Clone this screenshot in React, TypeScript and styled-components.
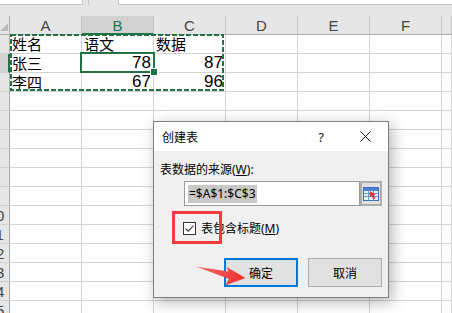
import React from "react";
import styled, { createGlobalStyle } from "styled-components";

const GlobalStyle = createGlobalStyle`
  html, body { margin: 0; padding: 0; background: #fff; overflow: hidden; }
  #root { width: 452px; height: 313px; }
`;

const Screen = styled.div`
  position: relative;
  width: 452px;
  height: 313px;
  overflow: hidden;
  background: #e6e6e6;
  font-family: "Liberation Sans", "Noto Sans CJK SC", sans-serif;
`;

const FormulaStrip = styled.div`
  display: flex;
  align-items: flex-start;
  height: 16px;
`;

const NameBox = styled.div`
  width: 82px;
  height: 4px;
  background: #fff;
  border-right: 1px solid #c6c6c6;
  border-bottom: 1px solid #c6c6c6;
`;

const StripGap = styled.div`
  width: 35px;
  height: 5px;
  display: flex;
  padding-left: 5px;
  box-sizing: border-box;
`;

const StripTick = styled.div`
  width: 1px;
  height: 5px;
  background: #c6c6c6;
`;

const FormulaInput = styled.div`
  flex: 1;
  height: 4px;
  background: #fff;
  border-left: 1px solid #c6c6c6;
  border-bottom: 1px solid #c6c6c6;
`;

const Sheet = styled.div`
  display: grid;
  grid-template-columns: 10px repeat(6, 72px) 10px;
  grid-auto-rows: 19px;
`;

const Corner = styled.div`
  position: relative;
  box-sizing: border-box;
  background: #e6e6e6;
  border-right: 1px solid #ababab;
  border-bottom: 1px solid #ababab;
  display: flex;
  align-items: flex-end;
  padding: 0 0 3px 0;
`;

const ColHeader = styled.div<{ $active?: boolean }>`
  box-sizing: border-box;
  background: ${(p) => (p.$active ? "#d2d2d2" : "#e6e6e6")};
  color: ${(p) => (p.$active ? "#217346" : "#444")};
  border-right: 1px solid #c6c6c6;
  border-bottom: ${(p) => (p.$active ? "2px solid #217346" : "1px solid #ababab")};
  display: flex;
  align-items: center;
  justify-content: center;
  font-size: 15px;
  padding-top: 1px;
`;

const RowHeader = styled.div<{ $active?: boolean }>`
  box-sizing: border-box;
  background: ${(p) => (p.$active ? "#d2d2d2" : "#e6e6e6")};
  border-right: ${(p) => (p.$active ? "2px solid #217346" : "1px solid #ababab")};
  border-bottom: 1px solid #d0d0d0;
  display: flex;
  justify-content: flex-end;
  align-items: center;
  overflow: hidden;
  color: #444;
  font-size: 15px;
`;

const RowNum = styled.span`
  flex-shrink: 0;
  width: 26px;
  text-align: center;
`;

const Cell = styled.div<{ $num?: boolean }>`
  box-sizing: border-box;
  background: #fff;
  border-right: 1px solid #d4d4d4;
  border-bottom: 1px solid #d4d4d4;
  display: flex;
  align-items: flex-end;
  justify-content: ${(p) => (p.$num ? "flex-end" : "flex-start")};
  padding: 0 ${(p) => (p.$num ? "2px" : "1px")} 0 ${(p) => (p.$num ? "0" : "2px")};
  font-size: ${(p) => (p.$num ? "17px" : "15px")};
  line-height: 18px;
  color: #000;
  white-space: nowrap;
`;

const CjkText = styled.span`
  font-family: "Noto Sans CJK SC", sans-serif;
  line-height: 18px;
`;

const Ants = styled.svg`
  position: absolute;
  left: 10px;
  top: 34px;
`;

const ActiveCell = styled.div`
  position: absolute;
  left: 80px;
  top: 52px;
  width: 75px;
  height: 21px;
  box-sizing: border-box;
  border: 2px solid #217346;
`;

const FillHandle = styled.div`
  position: absolute;
  right: -5px;
  bottom: -5px;
  width: 6px;
  height: 6px;
  background: #217346;
  border: 1px solid #fff;
`;

const Dialog = styled.div`
  position: absolute;
  left: 153px;
  top: 121px;
  width: 236px;
  height: 177px;
  box-sizing: border-box;
  border: 1px solid #7f7f7f;
  background: #f0f0f0;
  box-shadow: 3px 4px 14px rgba(0, 0, 0, 0.3);
  display: flex;
  flex-direction: column;
  font-family: "Noto Sans", "Noto Sans CJK SC", sans-serif;
  font-size: 12px;
  color: #000;
`;

const TitleBar = styled.div`
  height: 29px;
  background: #fff;
  display: flex;
  align-items: center;
  padding-left: 8px;
`;

const Title = styled.span`
  flex: 1;
`;

const HelpButton = styled.span`
  width: 28px;
  margin-right: 8px;
  text-align: center;
  font-size: 13px;
  color: #111;
`;

const CloseButton = styled.span`
  width: 45px;
  display: flex;
  justify-content: center;
  align-items: center;
`;

const Body = styled.div`
  flex: 1;
  display: flex;
  flex-direction: column;
  padding: 11px 6px 9px 6px;
`;

const Label = styled.div`
  line-height: 16px;
  height: 16px;
`;

const InputRow = styled.div`
  display: flex;
  margin: 3px 0 0 24px;
`;

const RangeInput = styled.div`
  width: 176px;
  height: 25px;
  box-sizing: border-box;
  border: 1px solid #9a9a9a;
  background: #fff;
  display: flex;
  align-items: center;
  padding-left: 3px;
`;

const Selected = styled.span`
  background: #c8c8c8;
  line-height: 18px;
  padding: 0 1px;
`;

const PickButton = styled.div`
  width: 22px;
  height: 25px;
  box-sizing: border-box;
  border: 2px solid #adadad;
  background: #e1e1e1;
  display: flex;
  align-items: center;
  justify-content: center;
`;

const CheckRow = styled.div`
  display: flex;
  align-items: center;
  height: 16px;
  margin: 14px 0 0 23px;
  gap: 5px;
`;

const CheckBox = styled.div`
  width: 13px;
  height: 13px;
  box-sizing: border-box;
  border: 1px solid #333;
  background: #fff;
  display: flex;
  align-items: center;
  justify-content: center;
`;

const ButtonRow = styled.div`
  display: flex;
  justify-content: flex-end;
  gap: 10px;
  margin-top: 22px;
`;

const Button = styled.div<{ $primary?: boolean }>`
  width: 74px;
  height: 29px;
  box-sizing: border-box;
  background: #e1e1e1;
  border: ${(p) => (p.$primary ? "2px solid #0078d7" : "1px solid #adadad")};
  display: flex;
  align-items: center;
  justify-content: center;
`;

const RedBox = styled.div`
  position: absolute;
  left: 172px;
  top: 211px;
  width: 50px;
  height: 33px;
  box-sizing: border-box;
  border: 3px solid #f23b3b;
`;

const Arrow = styled.svg`
  position: absolute;
  left: 0;
  top: 0;
  pointer-events: none;
`;

const cols = ["A", "B", "C", "D", "E", "F", ""];
const data: (string | number)[][] = [
  ["姓名", "语文", "数据"],
  ["张三", 78, 87],
  ["李四", 67, 96],
];

function PickIcon() {
  return (
    <svg width="16" height="14" viewBox="0 0 16 14">
      <rect x="0.5" y="0.5" width="15" height="13" fill="#eaf1fa" stroke="#3d6fb8" />
      <rect x="1" y="1" width="14" height="3" fill="#4f84cc" />
      <path d="M1 6.5H15M1 9.5H15M5.5 4V13.5M10.5 4V13.5" stroke="#6f97cf" strokeWidth="1" />
      <path d="M7 4.5 L7 10 L8.6 8.6 L10.6 12 L12 11.2 L10 7.9 L12.2 7.6 Z" fill="#e5392b" stroke="#b0221a" strokeWidth="0.5" />
    </svg>
  );
}

export default function App() {
  return (
    <Screen>
      <GlobalStyle />
      <FormulaStrip>
        <NameBox />
        <StripGap>
          <StripTick />
        </StripGap>
        <FormulaInput />
      </FormulaStrip>
      <Sheet>
        <Corner>
          <svg width="8" height="8" viewBox="0 0 8 8">
            <path d="M8 0 L8 8 L0 8 Z" fill="#b9b9b9" />
          </svg>
        </Corner>
        {cols.map((c, i) => (
          <ColHeader key={i} $active={c === "B"}>
            {c}
          </ColHeader>
        ))}
        {Array.from({ length: 15 }, (_, r) => (
          <React.Fragment key={r}>
            <RowHeader $active={r === 1}>
              <RowNum>{r + 1}</RowNum>
            </RowHeader>
            {cols.map((_, ci) => {
              const v = data[r]?.[ci];
              const isNum = typeof v === "number";
              return (
                <Cell key={ci} $num={isNum}>
                  {v === undefined ? null : isNum ? v : <CjkText>{v}</CjkText>}
                </Cell>
              );
            })}
          </React.Fragment>
        ))}
      </Sheet>

      <Ants width="214" height="57" viewBox="0 0 214 57">
        <rect x="1" y="1" width="212" height="55" fill="none" stroke="#217346" strokeWidth="2" strokeDasharray="5 2" />
      </Ants>
      <ActiveCell>
        <FillHandle />
      </ActiveCell>

      <Dialog>
        <TitleBar>
          <Title>创建表</Title>
          <HelpButton>?</HelpButton>
          <CloseButton>
            <svg width="11" height="11" viewBox="0 0 11 11">
              <path d="M0.5 0.5 L10.5 10.5 M10.5 0.5 L0.5 10.5" stroke="#111" strokeWidth="1" />
            </svg>
          </CloseButton>
        </TitleBar>
        <Body>
          <Label>
            表数据的来源(<u>W</u>):
          </Label>
          <InputRow>
            <RangeInput>
              <Selected>=$A$1:$C$3</Selected>
            </RangeInput>
            <PickButton>
              <PickIcon />
            </PickButton>
          </InputRow>
          <CheckRow>
            <CheckBox>
              <svg width="11" height="11" viewBox="0 0 11 11">
                <path d="M1.5 5.5 L4.2 8.2 L9.6 2.6" fill="none" stroke="#444" strokeWidth="1.2" />
              </svg>
            </CheckBox>
            <span>
              表包含标题(<u>M</u>)
            </span>
          </CheckRow>
          <ButtonRow>
            <Button $primary>确定</Button>
            <Button>取消</Button>
          </ButtonRow>
        </Body>
      </Dialog>

      <RedBox />
      <Arrow width="452" height="313" viewBox="0 0 452 313">
        <defs>
          <linearGradient id="ag" x1="0" y1="0" x2="1" y2="0">
            <stop offset="0" stopColor="#f76a6a" />
            <stop offset="1" stopColor="#ee2f2f" />
          </linearGradient>
        </defs>
        <path d="M196 266.5 L228.5 271.5 L226.5 267 L245.5 278 L225 285.5 L229 279 Z" fill="url(#ag)" />
      </Arrow>
    </Screen>
  );
}
